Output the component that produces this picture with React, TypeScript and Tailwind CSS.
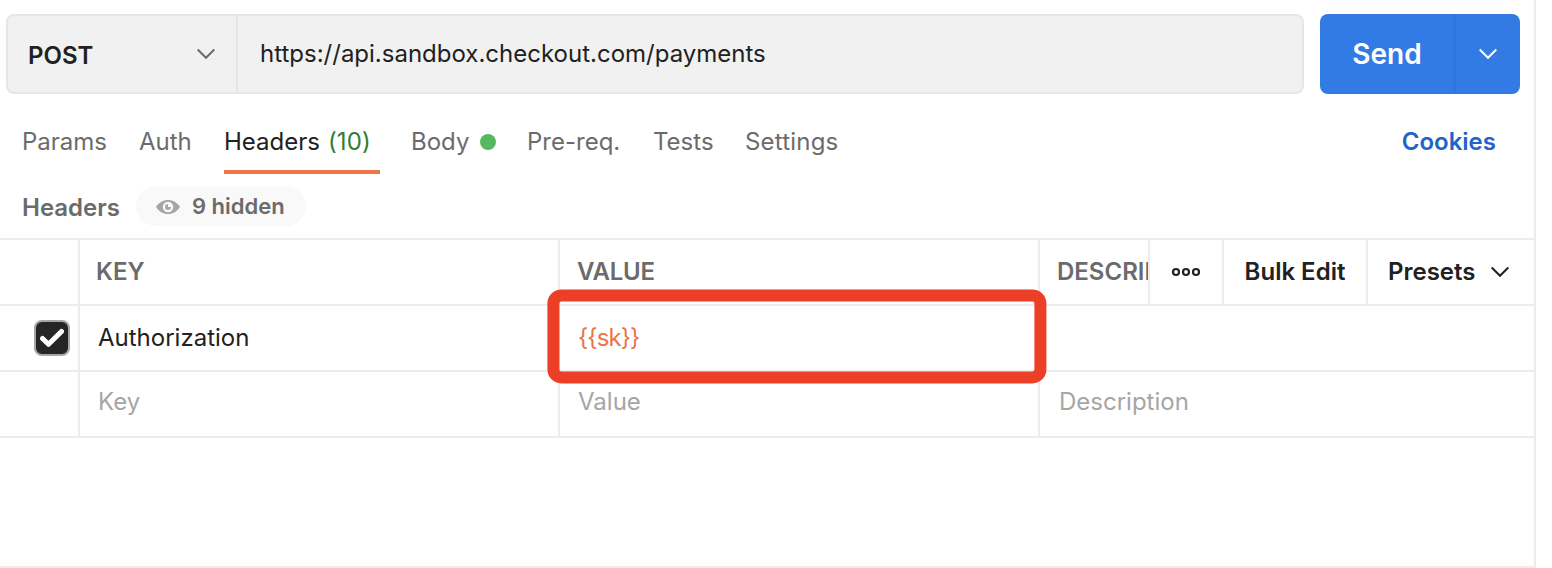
import type { ReactNode } from 'react'

type Tab = {
  label: string
  width: string
  count?: number
  dot?: boolean
}

const tabs: Tab[] = [
  { label: 'Params', width: 'w-[117px]' },
  { label: 'Auth', width: 'w-[85px]' },
  { label: 'Headers', width: 'w-[187px]', count: 10 },
  { label: 'Body', width: 'w-[116px]', dot: true },
  { label: 'Pre-req.', width: 'w-[126px]' },
  { label: 'Tests', width: 'w-[92px]' },
  { label: 'Settings', width: 'w-[120px] tracking-[0.2px]' },
]

function Chevron({ className }: { className?: string }) {
  return (
    <svg
      viewBox="0 0 20 12"
      className={`h-3 w-5 shrink-0 ${className ?? ''}`}
      fill="none"
      stroke="currentColor"
      strokeWidth="2"
    >
      <path d="M1.7 1.5 L10 9.8 L18.3 1.5" />
    </svg>
  )
}

function EyeIcon() {
  return (
    <svg viewBox="0 0 24 14" className="h-3.5 w-6 shrink-0">
      <path d="M0 7 C3 2.2 7.2 0 12 0 C16.8 0 21 2.2 24 7 C21 11.8 16.8 14 12 14 C7.2 14 3 11.8 0 7 Z" fill="#a6a6a6" />
      <circle cx="12" cy="7" r="5.2" fill="#f9f9f9" />
      <path d="M12 4 A3 3 0 1 0 15 7 L12 7 Z" fill="#a6a6a6" />
    </svg>
  )
}

function Cell({ width, children }: { width: string; children?: ReactNode }) {
  return (
    <div className={`flex shrink-0 items-center overflow-hidden whitespace-nowrap border-[#ececec] ${width}`}>
      {children}
    </div>
  )
}

export default function App() {
  return (
    <div className="h-[568px] w-full overflow-hidden bg-white font-['Inter',sans-serif] text-2xl text-[#212121]">
      <div className="relative flex h-full w-[1536px] flex-col border-r-2 border-b-2 border-[#ececec]">
        {/* Request line */}
        <div className="flex h-[94px] shrink-0 gap-4 pt-3.5 pl-1.5">
          <div className="flex h-20 w-[1298px] rounded-lg border-2 border-[#e6e6e6] bg-[#f1f1f1]">
            <button className="flex w-[230px] items-center justify-between border-r-2 border-[#e6e6e6] pr-5 pl-5">
              <span className="pt-1 font-semibold">POST</span>
              <Chevron className="text-[#6b6b6b]" />
            </button>
            <span className="flex items-center pl-[22px]">
              https://api.sandbox.checkout.com/payments
            </span>
          </div>
          <div className="flex h-20 w-[200px] overflow-hidden rounded-lg bg-[#327be5] text-white">
            <button className="flex w-[136px] items-center justify-center border-r-2 border-[#2f74d8] pt-0.5 text-[28px] font-semibold">
              Send
            </button>
            <button className="flex flex-1 items-center justify-center">
              <Chevron />
            </button>
          </div>
        </div>

        {/* Tabs */}
        <div className="flex h-20 shrink-0 justify-between pr-[38px] pl-[22px] text-[#6b6b6b]">
          <div className="flex">
            {tabs.map((tab) => (
              <div key={tab.label} className={`flex ${tab.width}`}>
                {tab.count ? (
                  <div className="flex h-20 w-[156px] items-center border-b-4 border-[#ed7446] pt-5 text-[#212121]">
                    {tab.label}
                    <span className="ml-2 tracking-[0.1px] text-[#2f7d32]">({tab.count})</span>
                  </div>
                ) : (
                  <div className="flex h-20 items-center pt-4">
                    {tab.label}
                    {tab.dot && <span className="ml-[11px] size-4 rounded-full bg-[#56b85f]" />}
                  </div>
                )}
              </div>
            ))}
          </div>
          <button className="pt-4 font-semibold text-[#2262c9]">Cookies</button>
        </div>

        {/* Section title */}
        <div className="flex h-16 shrink-0 items-center pl-[22px] font-semibold text-[#6b6b6b]">
          <span className="w-[114px] pt-1">Headers</span>
          <div className="flex h-10 w-[170px] items-center rounded-full bg-[#f9f9f9] pt-0.5 pl-5">
            <EyeIcon />
            <span className="pl-3 text-[22px]">9 hidden</span>
          </div>
        </div>

        {/* Table */}
        <div className="border-y-2 border-[#ececec]">
          <div className="flex h-16 font-semibold text-[#6b6b6b]">
            <Cell width="w-20 border-r-2" />
            <Cell width="w-[480px] border-r-2 pl-4">KEY</Cell>
            <Cell width="w-[480px] border-r-2 pl-[17px] tracking-[-0.2px]">VALUE</Cell>
            <Cell width="w-[110px] border-r-2 pl-[17px]">DESCRIPTION</Cell>
            <Cell width="w-[74px] justify-center border-r-2">
              <svg viewBox="0 0 30 10" className="h-2.5 w-[30px]" fill="none" stroke="#212121" strokeWidth="2.2">
                <circle cx="5" cy="5" r="3" />
                <circle cx="15" cy="5" r="3" />
                <circle cx="25" cy="5" r="3" />
              </svg>
            </Cell>
            <Cell width="w-[144px] justify-center border-r-2 text-[#212121]">Bulk Edit</Cell>
            <Cell width="w-[166px] justify-between pr-6 pl-5 text-[#212121]">
              Presets
              <Chevron />
            </Cell>
          </div>
          <div className="flex h-[66px] border-t-2 border-[#ececec]">
            <Cell width="w-20 border-r-2 pl-[34px]">
              <div className="flex size-9 items-center justify-center rounded-lg border-2 border-[#a6a6a6] bg-[#262626]">
                <svg viewBox="0 0 24 20" className="h-5 w-6" fill="none" stroke="#fff" strokeWidth="5" strokeLinecap="round" strokeLinejoin="round">
                  <path d="M2.5 10.5 L8.5 16.3 L21.5 3.5" />
                </svg>
              </div>
            </Cell>
            <Cell width="w-[480px] border-r-2 pl-[18px]">Authorization</Cell>
            <Cell width="w-[480px] border-r-2 pl-[18px] tracking-[-0.9px] text-[#ed7446]">{'{{sk}}'}</Cell>
            <Cell width="w-[494px]" />
          </div>
          <div className="flex h-[66px] border-t-2 border-[#ececec] text-[#a6a6a6]">
            <Cell width="w-20 border-r-2" />
            <Cell width="w-[480px] border-r-2 pb-1 pl-[18px]">Key</Cell>
            <Cell width="w-[480px] border-r-2 pb-1 pl-[18px]">Value</Cell>
            <Cell width="w-[494px] pb-1 pl-[19px]">Description</Cell>
          </div>
        </div>

        {/* Highlight around the secret key value */}
        <div className="absolute top-[289px] left-[547px] h-[94px] w-[499px] translate-x-[0.4px] translate-y-[0.4px] rounded-[14px] border-12 border-[#eb3f26]" />
      </div>
    </div>
  )
}
